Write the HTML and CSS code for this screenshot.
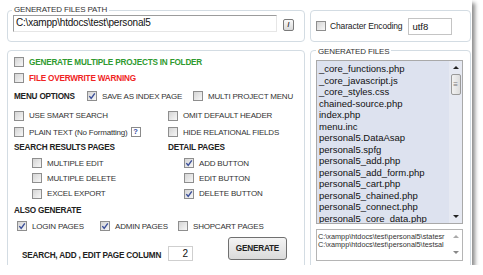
FILE: index.html
```html
<!DOCTYPE html>
<html lang="en">
<head>
    <meta charset="UTF-8">
    <meta name="viewport" content="width=device-width, initial-scale=1.0">
    <title>Generated Files</title>
    <link rel="stylesheet" href="styles.css">
</head>
<body>
    <div class="panel">
        <div class="layout">
            <div class="box path-box">
                <span class="legend">GENERATED FILES PATH</span>
                <div class="path-input">C:\xampp\htdocs\test\personal5</div>
                <span class="small-btn">/</span>
            </div>

            <div class="box enc-box">
                <span class="cb"></span>
                <span class="enc-label">Character Encoding</span>
                <div class="enc-input">utf8</div>
            </div>

            <div class="box options-box">
                <div class="row r1">
                    <span class="cb"></span>
                    <span class="lbl bold green">GENERATE MULTIPLE PROJECTS IN FOLDER</span>
                </div>
                <div class="row r2">
                    <span class="cb"></span>
                    <span class="lbl bold red">FILE OVERWRITE WARNING</span>
                </div>
                <div class="row r3">
                    <span class="lbl bold menu-title">MENU OPTIONS</span>
                    <span class="item save-index">
                        <span class="cb on"><svg viewBox="0 0 8 8"><path d="M1.3 4.1 L3.2 6.3 L6.8 1.3"/></svg></span>
                        <span class="lbl">SAVE AS INDEX PAGE</span>
                    </span>
                    <span class="item">
                        <span class="cb"></span>
                        <span class="lbl">MULTI PROJECT MENU</span>
                    </span>
                </div>

                <div class="opts">
                    <div class="item"><span class="cb"></span><span class="lbl">USE SMART SEARCH</span></div>
                    <div class="item"><span class="cb"></span><span class="lbl">OMIT DEFAULT HEADER</span></div>

                    <div class="item">
                        <span class="cb"></span><span class="lbl">PLAIN TEXT (No Formatting)</span>
                        <span class="help">?</span>
                    </div>
                    <div class="item"><span class="cb"></span><span class="lbl">HIDE RELATIONAL FIELDS</span></div>

                    <div class="item"><span class="lbl bold">SEARCH RESULTS PAGES</span></div>
                    <div class="item"><span class="lbl bold">DETAIL PAGES</span></div>

                    <div class="item sub-left"><span class="cb"></span><span class="lbl">MULTIPLE EDIT</span></div>
                    <div class="item sub-right">
                        <span class="cb on"><svg viewBox="0 0 8 8"><path d="M1.3 4.1 L3.2 6.3 L6.8 1.3"/></svg></span>
                        <span class="lbl">ADD BUTTON</span>
                    </div>

                    <div class="item sub-left"><span class="cb"></span><span class="lbl">MULTIPLE DELETE</span></div>
                    <div class="item sub-right"><span class="cb"></span><span class="lbl">EDIT BUTTON</span></div>

                    <div class="item sub-left"><span class="cb"></span><span class="lbl">EXCEL EXPORT</span></div>
                    <div class="item sub-right">
                        <span class="cb on"><svg viewBox="0 0 8 8"><path d="M1.3 4.1 L3.2 6.3 L6.8 1.3"/></svg></span>
                        <span class="lbl">DELETE BUTTON</span>
                    </div>
                </div>

                <div class="row r10">
                    <span class="lbl bold">ALSO GENERATE</span>
                </div>
                <div class="row r11">
                    <span class="item login">
                        <span class="cb on"><svg viewBox="0 0 8 8"><path d="M1.3 4.1 L3.2 6.3 L6.8 1.3"/></svg></span>
                        <span class="lbl">LOGIN PAGES</span>
                    </span>
                    <span class="item admin">
                        <span class="cb on"><svg viewBox="0 0 8 8"><path d="M1.3 4.1 L3.2 6.3 L6.8 1.3"/></svg></span>
                        <span class="lbl">ADMIN PAGES</span>
                    </span>
                    <span class="item">
                        <span class="cb"></span>
                        <span class="lbl">SHOPCART PAGES</span>
                    </span>
                </div>
                <div class="row r12">
                    <span class="lbl bold col-label">SEARCH, ADD , EDIT PAGE COLUMN</span>
                    <div class="col-input">2</div>
                    <span class="gen-btn">GENERATE</span>
                </div>
            </div>

            <div class="box files-box">
                <span class="legend">GENERATED FILES</span>
                <div class="file-list">
                    <ul>
                        <li>_core_functions.php</li>
                        <li>_core_javascript.js</li>
                        <li>_core_styles.css</li>
                        <li>chained-source.php</li>
                        <li>index.php</li>
                        <li>menu.inc</li>
                        <li>personal5.DataAsap</li>
                        <li>personal5.spfg</li>
                        <li>personal5_add.php</li>
                        <li>personal5_add_form.php</li>
                        <li>personal5_cart.php</li>
                        <li>personal5_chained.php</li>
                        <li>personal5_connect.php</li>
                        <li>personal5_core_data.php</li>
                    </ul>
                    <div class="scrollbar">
                        <span class="arrow up"></span>
                        <span class="thumb">≡</span>
                        <span class="arrow down"></span>
                    </div>
                </div>
                <div class="log">
                    <div class="log-text">
                        <div>C:\xampp\htdocs\test\personal5\statesr</div>
                        <div>C:\xampp\htdocs\test\personal5\testsal</div>
                    </div>
                    <div class="scrollbar light">
                        <span class="arrow up"></span>
                        <span class="arrow down"></span>
                    </div>
                </div>
            </div>
        </div>
    </div>
</body>
</html>
```

FILE: styles.css
```css
body {
    margin: 0;
    background: #fff;
    font-family: "Liberation Sans", Arial, sans-serif;
    color: #333;
}
.panel {
    width: 472px;
    height: 265px;
    background: #fff;
    overflow: hidden;
    box-shadow: 3px 3px 4px rgba(0, 0, 0, 0.45);
}
.layout {
    display: grid;
    grid-template-columns: 298px 161px;
    grid-template-rows: 32px 220px;
    column-gap: 5px;
    row-gap: 8px;
    padding: 10px 0 0 7px;
}
.box {
    position: relative;
    box-sizing: border-box;
    border: 1px solid #d3dce3;
    border-radius: 4px;
}
.legend {
    position: absolute;
    top: -6px;
    left: 4px;
    padding: 0 2px;
    background: #fff;
    font-size: 8px;
    letter-spacing: -0.15px;
    line-height: 10px;
    color: #333;
}

/* top row */
.path-box {
    display: flex;
    align-items: flex-start;
    padding: 4px 0 0 5px;
}
.path-input {
    width: 264px;
    height: 17px;
    box-sizing: border-box;
    border: 1px solid;
    border-color: #9c9c9c #e6e6e6 #e6e6e6 #9c9c9c;
    padding-left: 2px;
    font-size: 10px;
    letter-spacing: -0.2px;
    line-height: 13px;
    color: #111;
}
.small-btn {
    width: 11px;
    height: 12px;
    margin: 4px 0 0 6px;
    box-sizing: border-box;
    border: 1px solid #7a7a7a;
    border-radius: 2px;
    background: linear-gradient(#fafafa, #d9d9d9);
    font-size: 7px;
    font-weight: bold;
    line-height: 10px;
    text-align: center;
    color: #222;
}
.enc-box {
    display: flex;
    align-items: center;
    padding: 0 0 0 5px;
}
.enc-label {
    margin-left: 4px;
    font-size: 8.5px;
    letter-spacing: -0.15px;
    color: #222;
}
.enc-input {
    width: 44px;
    height: 17px;
    margin-left: 6px;
    box-sizing: border-box;
    border: 1px solid #c4c4c4;
    padding-left: 3px;
    font-size: 9.5px;
    line-height: 15px;
    color: #111;
}

/* checkboxes */
.cb {
    display: inline-block;
    flex: none;
    width: 10px;
    height: 10px;
    box-sizing: border-box;
    border: 1px solid #8e8e8e;
    background: linear-gradient(135deg, #d4d4d4, #f7f7f7);
}
.cb svg {
    display: block;
    width: 8px;
    height: 8px;
    fill: none;
    stroke: #3b4f9a;
    stroke-width: 1.4;
}
.lbl {
    font-size: 8px;
    letter-spacing: -0.2px;
    color: #333;
    white-space: nowrap;
}
.bold {
    font-size: 8.2px;
    font-weight: bold;
    color: #222;
}
.green {
    color: #2f9a2f;
}
.red {
    color: #f02424;
}
.item {
    display: flex;
    align-items: center;
    gap: 5px;
}

/* options box */
.options-box {
    padding: 3px 0 0 6px;
}
.row {
    display: flex;
    align-items: center;
    gap: 5px;
}
.r1, .r2 {
    height: 16px;
}
.r3 {
    height: 20px;
    gap: 0;
}
.menu-title {
    width: 73px;
}
.save-index {
    width: 106px;
}
.opts {
    display: grid;
    grid-template-columns: 154px 1fr;
    grid-template-rows: 19px 14px 17px 14px 16px 15px;
}
.help {
    width: 10px;
    height: 10px;
    box-sizing: border-box;
    margin-left: -2px;
    border: 1px solid #8a8a8a;
    background: #fff;
    font-size: 7.5px;
    font-weight: bold;
    line-height: 8px;
    text-align: center;
    color: #3048a0;
}
.sub-left {
    padding-left: 18px;
}
.sub-right {
    padding-left: 16px;
}
.r10 {
    height: 18px;
}
.r11 {
    height: 14px;
    gap: 0;
    padding-left: 3px;
}
.login {
    width: 83px;
}
.admin {
    width: 78px;
}
.r12 {
    align-items: flex-start;
    gap: 0;
}
.col-label {
    width: 146px;
    margin: 17px 0 0 8px;
    line-height: 12px;
}
.col-input {
    width: 25px;
    height: 15px;
    margin-top: 13px;
    box-sizing: border-box;
    border: 1px solid #cfcfcf;
    padding-right: 4px;
    font-size: 10px;
    line-height: 13px;
    text-align: right;
    color: #111;
}
.gen-btn {
    width: 59px;
    height: 23px;
    margin: 4px 0 0 35px;
    box-sizing: border-box;
    border: 1px solid #707070;
    border-radius: 3px;
    background: linear-gradient(#f4f4f4, #dadada);
    font-size: 8.2px;
    font-weight: bold;
    letter-spacing: -0.2px;
    line-height: 21px;
    text-align: center;
    color: #222;
}

/* generated files */
.files-box {
    padding: 9px 0 0 5px;
}
.files-box .legend {
    top: -4px;
    left: 5px;
}
.file-list {
    display: flex;
    width: 147px;
    height: 164px;
    box-sizing: border-box;
    border: 1px solid #a9a9a9;
    background: #dde2ef;
}
.file-list ul {
    flex: 1;
    margin: 0;
    padding: 2px 0 0 2px;
    list-style: none;
    overflow: hidden;
}
.file-list li {
    font-size: 9.5px;
    line-height: 11.5px;
    color: #111;
    white-space: nowrap;
}
.scrollbar {
    display: flex;
    flex-direction: column;
    align-items: center;
    width: 13px;
    background: #e6e9f2;
}
.arrow {
    width: 0;
    height: 0;
    border-left: 3px solid transparent;
    border-right: 3px solid transparent;
}
.arrow.up {
    margin-top: 5px;
    border-bottom: 3px solid #222;
}
.arrow.down {
    margin-top: auto;
    margin-bottom: 5px;
    border-top: 3px solid #222;
}
.thumb {
    width: 10px;
    height: 21px;
    margin-top: 5px;
    box-sizing: border-box;
    border: 1px solid #9a9a9a;
    border-radius: 2px;
    background: linear-gradient(90deg, #f2f2f2, #dcdcdc);
    font-size: 8px;
    line-height: 19px;
    text-align: center;
    color: #777;
}
.log {
    display: flex;
    width: 147px;
    height: 32px;
    margin-top: 5px;
    box-sizing: border-box;
    border: 1px solid #b5b5b5;
    background: #fff;
}
.log-text {
    flex: 1;
    padding: 3px 0 0 1px;
    overflow: hidden;
    font-size: 7.3px;
    line-height: 8px;
    color: #333;
    white-space: nowrap;
}
.scrollbar.light {
    background: #fff;
}
.scrollbar.light .arrow.up {
    border-bottom-color: #aaa;
}
.scrollbar.light .arrow.down {
    margin-bottom: 6px;
    border-top-color: #888;
}
```
